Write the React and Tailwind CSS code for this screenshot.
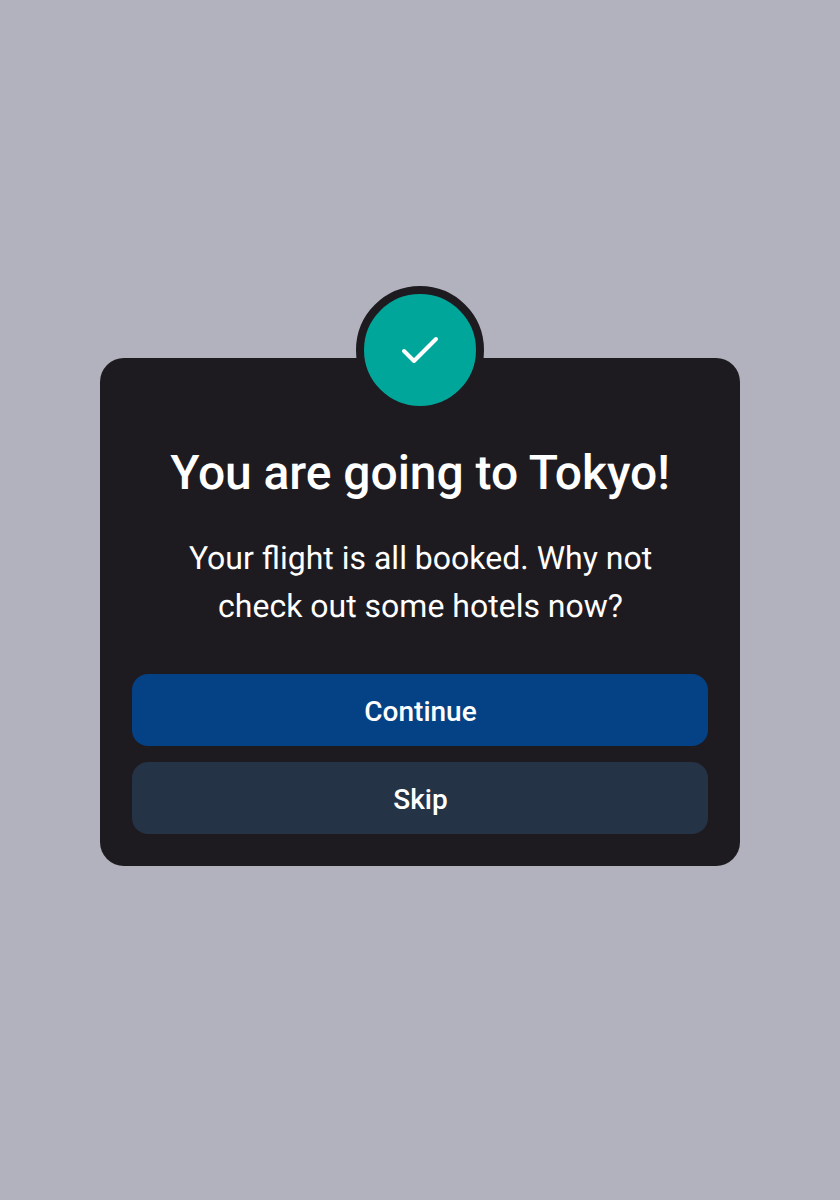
export default function App() {
  return (
    <main className="flex h-[1200px] w-[840px] flex-col items-center bg-[#b2b2be] pt-[358px] font-['Roboto',sans-serif] text-white [text-rendering:geometricPrecision]">
      <section className="relative flex w-[640px] flex-col items-center rounded-[24px] bg-[#1e1b20] px-8 pt-[83px] pb-8">
        <div className="absolute -top-[72px] left-1/2 flex size-32 -translate-x-1/2 items-center justify-center rounded-full border-8 border-[#1e1b20] bg-[#00a699]">
          <svg className="size-12" viewBox="0 0 24 24" fill="none" stroke="currentColor" strokeWidth="2" strokeLinecap="round" strokeLinejoin="round" aria-hidden="true">
            <path d="M20 6.5 9 17.5l-5-5" />
          </svg>
        </div>
        <h1 className="h-16 text-[48px] leading-[64px] font-medium tracking-[-0.06px] whitespace-nowrap">You are going to Tokyo!</h1>
        <p className="mt-[29px] pl-px text-center text-[32px] leading-[48px]">
          Your flight is all booked. Why not
          <br />
          check out some hotels now?
        </p>
        <div className="mt-11 flex w-full flex-col gap-4">
          <button className="h-[72px] rounded-2xl bg-[#054185] pt-1 pl-px text-[28px] font-medium">Continue</button>
          <button className="h-[72px] rounded-2xl bg-[#253346] pt-1 pl-px text-[28px] font-medium">Skip</button>
        </div>
      </section>
    </main>
  );
}
